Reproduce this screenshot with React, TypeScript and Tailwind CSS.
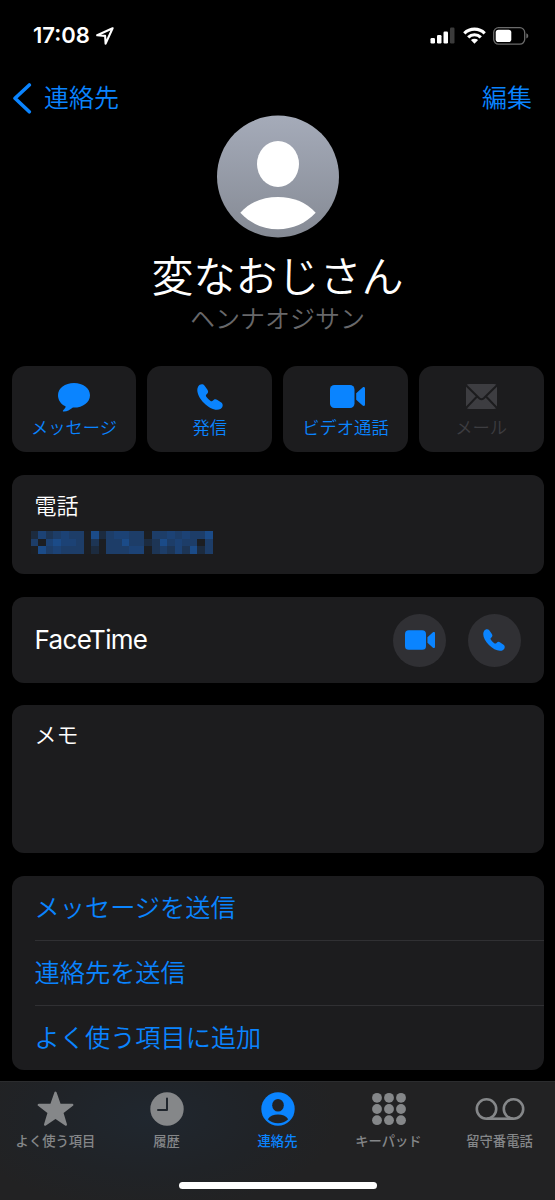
import React from "react";
import { clsx } from "clsx";

// 伏せ字にした電話番号（0 = 一番暗い, 5 = 一番明るい）
const maskedNumber = [
    "142343305134433033434335",
    "304544302033533125343303",
    "053433301033344023242513",
];

const maskColors: Record<string, string> = {
    "0": "bg-[#1c1e22]",
    "1": "bg-[#1c2b3f]",
    "2": "bg-[#1d3555]",
    "3": "bg-[#1d3d68]",
    "4": "bg-[#1c4275]",
    "5": "bg-[#1b4b88]",
};

const links = ["メッセージを送信", "連絡先を送信", "よく使う項目に追加"];

const MessageIcon = () => (
    <svg className="mt-[2px]" width="34" height="31" viewBox="0 0 34 31" fill="currentColor">
        <path d="M17 1C8 1 1 6.200 1 13.200c0 4.700 2.700 8.600 7 10.900.7.400.8.800.4 1.500-.6 1-1.500 1.900-2.200 2.600-.8.800-.3 1.400.8 1.300 3.300-.3 5.800-1.700 8.200-3.600.4-.3.900-.3 1.800-.3 9 0 16-5.300 16-12.400S26 1 17 1z" />
    </svg>
);

const PhoneIcon = ({ className }: { className?: string }) => (
    <svg className={className} viewBox="0 0 26 26" fill="currentColor">
        <path d="M1.200 2.400C2.600.2 5.800-.6 7.600 1.700l2.700 3.900c1.500 2.200.7 3.400-.7 4.700-1 .9-.9 1.600-.1 2.600 1 1.400 2.400 2.700 3.800 3.800 1 .8 1.800.8 2.700-.2 1.300-1.300 2.500-1.900 4.400-.6l3.900 2.600c2.200 1.600 1.600 4.800-.5 6.200C19.500 27.600 12.500 24.500 7 19 1.500 13.500-1.300 6.500 1.200 2.400z" />
    </svg>
);

const VideoIcon = ({ className }: { className?: string }) => (
    <svg className={className} viewBox="0 0 35 23" fill="currentColor">
        <rect x="0" y="0" width="24.500" height="23" rx="4.500" />
        <path d="M26.200 8.200 32.600 2.600c1-.9 2.400-.5 2.400 1v15.800c0 1.500-1.400 1.900-2.400 1l-6.400-5.600z" />
    </svg>
);

const MailIcon = () => (
    <svg width="31" height="25" viewBox="0 0 31 25">
        <rect width="31" height="25" rx="3" fill="currentColor" />
        <path
            d="M0 1.300 13.200 14.300q2.300 2 4.600 0L31 1.300M0 24 11 12.500M31 24 20 12.500"
            fill="none"
            stroke="#1c1c1e"
            strokeWidth="2"
        />
    </svg>
);

const actions = [
    { label: "メッセージ", icon: <MessageIcon />, enabled: true },
    { label: "発信", icon: <PhoneIcon className="w-[26px] h-[26px]" />, enabled: true },
    { label: "ビデオ通話", icon: <VideoIcon className="ml-[4px] w-[35px] h-[23px]" />, enabled: true },
    { label: "メール", icon: <MailIcon />, enabled: false },
];

const tabs = [
    {
        label: "よく使う項目",
        icon: (
            <svg width="37" height="36" viewBox="0 0 37 36" fill="currentColor" stroke="currentColor" strokeWidth="2.400" strokeLinejoin="round">
                <path d="M18.500 1.800 22.600 13.600 35.200 13.900 25.200 21.500 28.800 33.600 18.500 26.400 8.200 33.600 11.800 21.500 1.800 13.900 14.400 13.600z" />
            </svg>
        ),
    },
    {
        label: "履歴",
        icon: (
            <svg width="34" height="34" viewBox="0 0 34 34">
                <circle cx="17" cy="17" r="16.700" fill="currentColor" />
                <path d="M17 6.500v11.400H8" fill="none" stroke="#20262d" strokeWidth="2" strokeLinecap="round" strokeLinejoin="round" />
            </svg>
        ),
    },
    {
        label: "連絡先",
        active: true,
        icon: (
            <svg width="34" height="34" viewBox="0 0 34 34">
                <circle cx="17" cy="17" r="16.700" fill="currentColor" />
                <ellipse cx="17" cy="13.300" rx="5.800" ry="6.300" fill="#222325" />
                <path d="M6.800 27.200C9 24 12.700 22.600 17 22.600s8 1.400 10.200 4.600C24.500 29.800 21 31.200 17 31.200s-7.500-1.400-10.200-4z" fill="#222325" />
            </svg>
        ),
    },
    {
        label: "キーパッド",
        icon: (
            <svg width="34" height="34" viewBox="0 0 34 34" fill="currentColor">
                {[5.8, 17, 28.2].map((y) =>
                    [5, 17, 29].map((x) => <circle key={`${x}-${y}`} cx={x} cy={y} r="4.900" />)
                )}
            </svg>
        ),
    },
    {
        label: "留守番電話",
        icon: (
            <svg width="50" height="34" viewBox="0 0 50 34" fill="none" stroke="currentColor" strokeWidth="2.600">
                <circle cx="11.500" cy="17" r="9.700" />
                <circle cx="38.500" cy="17" r="9.700" />
                <path d="M11.500 26.700h27" />
            </svg>
        ),
    },
];

const StatusBar = () => (
    <div className="flex h-[71px] items-center justify-between pl-[33px] pr-[26px] text-white">
        <div className="flex items-center gap-[5px]">
            <span className="w-[58px] whitespace-nowrap font-['Inter'] text-[22px] font-semibold">
                17:08
            </span>
            <svg width="18" height="18" viewBox="0 0 18 18" fill="none" stroke="currentColor" strokeWidth="2.100" strokeLinejoin="round">
                <path d="M16.600 1.200 1.200 8.200l7.900.7.500 7.700z" />
            </svg>
        </div>
        <div className="flex items-center">
            <svg width="25" height="17" viewBox="0 0 25 17" fill="currentColor">
                <rect x="0.500" y="11" width="4.500" height="5.500" rx="1.200" />
                <rect x="7" y="8" width="4.500" height="8.500" rx="1.200" />
                <rect x="13.500" y="4.500" width="4.500" height="12" rx="1.200" />
                <rect x="20" y="0.500" width="4.500" height="16" rx="1.200" opacity="0.230" />
            </svg>
            <svg className="ml-[8px]" width="23" height="17" viewBox="0 0 23 17" fill="none" stroke="currentColor" strokeWidth="3.200">
                <path d="M1.300 6.300a14.600 14.600 0 0 1 20.400 0" />
                <path d="M5.200 10.300a9 9 0 0 1 12.600 0" />
                <path d="M11.500 16.800 7.900 13.100a5.200 5.200 0 0 1 7.200 0z" fill="currentColor" stroke="none" />
            </svg>
            <svg className="ml-[7px]" width="36" height="18" viewBox="0 0 36 18">
                <rect x="0.700" y="0.700" width="31" height="16.400" rx="4.800" fill="none" stroke="#6b6b6b" strokeWidth="1.300" />
                <rect x="2.700" y="2.700" width="15.600" height="12.400" rx="2.800" fill="white" />
                <path d="M33.300 6.200q2 .8 2 2.700t-2 2.700z" fill="#6b6b6b" />
            </svg>
        </div>
    </div>
);

const Avatar = () => (
    <svg width="122" height="123" viewBox="0 0 122 123">
        <defs>
            <linearGradient id="avatar" x1="0" y1="0" x2="0" y2="1">
                <stop offset="0" stopColor="#a5abb9" />
                <stop offset="1" stopColor="#858a94" />
            </linearGradient>
        </defs>
        <circle cx="61" cy="61.500" r="61" fill="url(#avatar)" />
        <ellipse cx="61" cy="49" rx="21" ry="23" fill="white" />
        <path d="M23.300 97.800C33 87 46 82 61 82s28 5 37.700 15.800C88.500 108.600 76 114.200 61 114.200S33.500 108.600 23.300 97.800z" fill="white" />
    </svg>
);

const App = () => {
    return (
        <div className="flex h-[1200px] w-[555px] flex-col overflow-hidden bg-black font-['Inter','Noto_Sans_CJK_JP',sans-serif] text-white">
            <StatusBar />

            {/* ナビゲーション */}
            <div className="flex h-[44px] items-start justify-between pl-[12px] pr-[23px] text-[25px] font-[350] leading-[54px] text-[#0a84ff]">
                <div className="flex h-[54px] items-center gap-[12px]">
                    <svg width="20" height="31" viewBox="0 0 20 31" fill="none" stroke="currentColor" strokeWidth="3.600" strokeLinecap="round" strokeLinejoin="round">
                        <path d="M17.300 2 3 15.300l14.300 13.500" />
                    </svg>
                    <span>連絡先</span>
                </div>
                <span>編集</span>
            </div>

            {/* プロフィール */}
            <div className="flex h-[251px] flex-col items-center">
                <Avatar />
                <h1 className="mt-[9px] text-[42px] font-[350] leading-[60px]">変なおじさん</h1>
                <p className="-mt-[5px] text-[25px] font-[350] leading-[34px] text-[#68686a]">ヘンナオジサン</p>
            </div>

            {/* アクション */}
            <div className="grid h-[86px] grid-cols-4 gap-[11px] pl-[11.600px] pr-[11.400px]">
                {actions.map((action) => (
                    <button
                        key={action.label}
                        className={clsx(
                            "flex flex-col items-center rounded-[14px] bg-[#1c1c1e] pt-[13px]",
                            action.enabled ? "text-[#0a84ff]" : "text-[#3d3d41]"
                        )}
                    >
                        <span className="flex h-[35px] items-center">{action.icon}</span>
                        <span className="whitespace-nowrap text-[17.300px] font-[350] leading-[28px]">{action.label}</span>
                    </button>
                ))}
            </div>

            <div className="flex flex-col gap-[23px] pl-[11.600px] pr-[11.400px] pt-[23px]">
                <section className="h-[99px] rounded-[12px] bg-[#1c1c1e] pl-[19px] pt-[15px]">
                    <p className="pl-[4px] text-[22px] font-[350] leading-[32px]">電話</p>
                    <div className="mt-[9px] grid h-[23px] w-[182px] grid-cols-24 grid-rows-3">
                        {maskedNumber.join("").split("").map((level, index) => (
                            <div key={index} className={maskColors[level]} />
                        ))}
                    </div>
                </section>

                <section className="flex h-[86px] items-center rounded-[12px] bg-[#1c1c1e] pl-[23px] pr-[23px]">
                    <p className="flex-1 text-[26px] leading-[36px] tracking-[-0.700px]">FaceTime</p>
                    <div className="flex gap-[22px] text-[#0a84ff]">
                        <button className="flex size-[53px] items-center justify-center rounded-full bg-[#303034]">
                            <VideoIcon className="ml-px h-[20px] w-[30px]" />
                        </button>
                        <button className="flex size-[53px] items-center justify-center rounded-full bg-[#303034]">
                            <PhoneIcon className="size-[22px]" />
                        </button>
                    </div>
                </section>

                <section className="-mt-px h-[148px] rounded-[12px] bg-[#1c1c1e] pl-[23px] pt-[14px]">
                    <p className="text-[22px] font-[350] leading-[32px]">メモ</p>
                </section>

                <section className="flex h-[194px] flex-col rounded-[12px] bg-[#1c1c1e] pl-[23px]">
                    {links.map((link, index) => (
                        <a
                            key={link}
                            className={clsx(
                                "flex flex-1 items-center pt-[2px] text-[25.200px] font-[350] text-[#0a84ff]",
                                index > 0 && "border-t border-[#303033]"
                            )}
                        >
                            {link}
                        </a>
                    ))}
                </section>
            </div>

            {/* タブバー */}
            <nav className="mt-auto flex h-[119px] flex-col items-center border-t border-[#2b2c2e] bg-[#222223] bg-[radial-gradient(ellipse_190px_95px_at_150px_35px,#20272f,#202327_60%,#222223)]">
                <div className="grid w-full grid-cols-5">
                    {tabs.map((tab) => (
                        <div
                            key={tab.label}
                            className={clsx(
                                "flex flex-col items-center pt-[8px]",
                                tab.active ? "text-[#0a84ff]" : "text-[#858789]"
                            )}
                        >
                            <span className="flex h-[37px] items-center">{tab.icon}</span>
                            <span className="mt-[4px] whitespace-nowrap text-[13.300px] font-medium leading-[20px]">
                                {tab.label}
                            </span>
                        </div>
                    ))}
                </div>
                <div className="mb-[11px] mt-auto h-[7px] w-[198px] rounded-full bg-white" />
            </nav>
        </div>
    );
};

export default App;
